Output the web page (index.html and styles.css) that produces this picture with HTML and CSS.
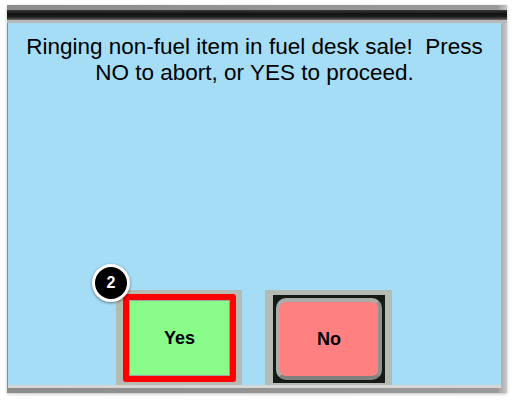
FILE: index.html
```html
<!DOCTYPE html>
<html>
<head>
<meta charset="utf-8">
<link rel="stylesheet" href="styles.css">
</head>
<body>
<div class="frame">
  <div class="topbar"></div>
  <div class="screen">
    <p class="message">Ringing non-fuel item in fuel desk sale!&nbsp; Press<br>NO to abort, or YES to proceed.</p>
    <div class="buttons">
      <div class="btn-slot yes-slot">
        <span class="badge">2</span>
        <div class="btn-yes"><span>Yes</span></div>
      </div>
      <div class="btn-slot no-slot">
        <div class="btn-no"><div class="no-face"><span>No</span></div></div>
      </div>
    </div>
  </div>
</div>
</body>
</html>
```

FILE: styles.css
```css
html, body {
  margin: 0;
  padding: 0;
  background: #ffffff;
}
body {
  width: 515px;
  height: 403px;
  overflow: hidden;
  font-family: "Liberation Sans", Arial, sans-serif;
}
.frame {
  margin: 5px 0 0 7px;
  width: 500px;
  height: 388px;
  background: linear-gradient(to right, #8c8c8c 0, #9a9a9a 98%, #c8c8c8 100%);
  box-shadow: 0 1px 3px rgba(0,0,0,0.25);
  display: flex;
  flex-direction: column;
}
.topbar {
  height: 10px;
  margin-top: 5px;
  background: linear-gradient(to bottom, #3a3a3a 0, #111 40%, #202020 70%, #6a6a6a 100%);
  border-bottom: 3px solid #b9b9b9;
}
.screen {
  margin: 0 6px 0 1px;
  height: 362px;
  background: #a5ddf6;
  display: flex;
  flex-direction: column;
  border-bottom: 3px solid #d6d6d6;
}
.message {
  margin: 0;
  padding-top: 11px;
  font-size: 22.5px;
  line-height: 26px;
  text-align: center;
  color: #000;
}
.buttons {
  margin-top: auto;
  display: flex;
  gap: 23px;
  padding-left: 108px;
}
.btn-slot {
  position: relative;
  height: 95px;
  background: #b3bbb2;
}
.yes-slot {
  width: 126px;
  padding: 4px 0 0 7px;
  box-sizing: border-box;
}
.no-slot {
  width: 127px;
  padding: 5px 0 0 8px;
  box-sizing: border-box;
}
.btn-yes {
  width: 113px;
  height: 88px;
  box-sizing: border-box;
  border: 6px solid #ff0000;
  border-radius: 3px;
  background: #88fb88;
  box-shadow: inset 0 0 0 1px #a0a0a0;
  display: flex;
  align-items: center;
  justify-content: center;
}
.btn-no {
  width: 112px;
  height: 88px;
  box-sizing: border-box;
  border: 3px solid #161a16;
  background: #161a16;
  padding: 0;
}
.no-face {
  width: 100%;
  height: 100%;
  box-sizing: border-box;
  border: 4px solid #a9aca9;
  border-bottom-color: #7e817e;
  border-right-color: #8e918e;
  border-radius: 10px;
  background: #ff8080;
  display: flex;
  align-items: center;
  justify-content: center;
}
.btn-yes span, .no-face span {
  font-size: 18px;
  font-weight: bold;
  color: #000;
}
.badge {
  position: absolute;
  left: -24px;
  top: -26px;
  width: 32px;
  height: 32px;
  border: 3px solid #fff;
  border-radius: 50%;
  background: #000;
  color: #fff;
  font-size: 16px;
  font-weight: bold;
  line-height: 32px;
  text-align: center;
  box-shadow: 0 1px 3px rgba(0,0,0,0.5);
}
```
